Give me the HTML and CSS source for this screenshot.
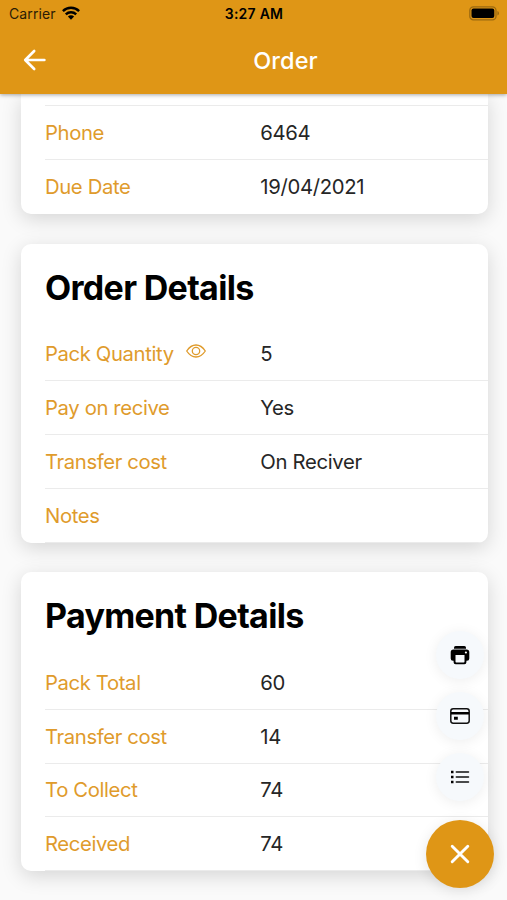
FILE: index.html
```html
<!DOCTYPE html>
<html lang="en">
<head>
<meta charset="utf-8">
<meta name="viewport" content="width=device-width, initial-scale=1">
<title>Order</title>
<link rel="stylesheet" href="styles.css">
</head>
<body>
<header class="header">
  <div class="status">
    <div class="status-left">
      <span class="carrier">Carrier</span>
      <svg class="wifi" viewBox="0 0 18 14" width="18" height="14"><g fill="none" stroke="#000" stroke-width="2.4"><path d="M.9 5.1a11.5 11.5 0 0 1 16.2 0"/><path d="M3.8 8.4a7.4 7.4 0 0 1 10.4 0"/></g><path d="M5.900 10.600a4.400 4.400 0 0 1 6.200 0L9 13.800z"/></svg>
    </div>
    <span class="clock">3:27 AM</span>
    <svg class="battery" viewBox="0 0 31 15" width="31" height="15"><rect x=".8" y=".8" width="26.2" height="13" rx="3.6" fill="none" stroke="#9c6a10" stroke-width="1.3"/><rect x="2.5" y="2.5" width="22.8" height="9.6" rx="2"/><path d="M28.4 5v4.6q1.6-.6 1.6-2.3T28.4 5z" fill="#9c6a10"/></svg>
  </div>
  <div class="navbar">
    <svg class="back" viewBox="0 0 24 22" width="24" height="22" fill="none" stroke="#fff" stroke-width="2.6" stroke-linecap="round" stroke-linejoin="round"><path d="M11.2 2 2.2 11l9 9M2.8 11h18.6"/></svg>
    <h1 class="title">Order</h1>
  </div>
</header>
<main class="content">
  <section class="card card-continued">
    <div class="row row-hidden"></div>
    <div class="row"><span class="label">Phone</span><span class="value">6464</span></div>
    <div class="row"><span class="label">Due Date</span><span class="value">19/04/2021</span></div>
  </section>
  <section class="card">
    <h2 class="heading">Order Details</h2>
    <div class="row"><span class="label">Pack Quantity
      <svg class="eye" viewBox="0 0 20 14" width="20" height="14" fill="none" stroke="currentColor" stroke-width="1.3"><path d="M.7 7C3.2 3.2 6.4 1 10 1s6.800 2.200 9.300 6C16.800 10.800 13.600 13 10 13S3.200 10.800.7 7z"/><circle cx="10" cy="7" r="3.700"/></svg></span><span class="value">5</span></div>
    <div class="row"><span class="label">Pay on recive</span><span class="value">Yes</span></div>
    <div class="row"><span class="label">Transfer cost</span><span class="value">On Reciver</span></div>
    <div class="row"><span class="label">Notes</span><span class="value"></span></div>
  </section>
  <section class="card">
    <h2 class="heading">Payment Details</h2>
    <div class="row"><span class="label">Pack Total</span><span class="value">60</span></div>
    <div class="row"><span class="label">Transfer cost</span><span class="value">14</span></div>
    <div class="row"><span class="label">To Collect</span><span class="value">74</span></div>
    <div class="row"><span class="label">Received</span><span class="value">74</span></div>
  </section>
</main>
<nav class="fab">
  <button class="fab-item" aria-label="Print"><svg viewBox="0 0 20 20" width="20" height="20"><path d="M4 3.700V2.600Q4 1 5.600 1h8.800Q16 1 16 2.600v1.100z"/><path fill-rule="evenodd" d="M3.500 4.500h13q2.800 0 2.800 2.800v6.200q0 2.300-2.300 2.300h-.6v1.500q0 2-2 2H5.600q-2 0-2-2v-1.500H3Q.7 15.800.7 13.500V7.300q0-2.800 2.800-2.800zM5.500 10v6.700q0 .8.8.8h7.400q.8 0 .8-.8V10z"/><circle cx="15.900" cy="7.500" r="1.100" fill="#fff"/></svg></button>
  <button class="fab-item" aria-label="Card"><svg viewBox="0 0 20 16" width="20" height="16"><rect x=".8" y=".8" width="18.400" height="14.400" rx="2.400" fill="none" stroke="#111" stroke-width="1.500"/><path d="M1 4h18v2.400H1zM4 8.800h3.800v3H4z"/></svg></button>
  <button class="fab-item" aria-label="List"><svg viewBox="0 0 20 14" width="20" height="14"><path d="M6.300 2H18.500M6.300 7H18.500M6.300 12H18.500" stroke="#111" stroke-width="1.500" stroke-linecap="round"/><path d="M1 .8h2.500v2.500H1zM1 5.800h2.500v2.500H1zM1 10.700h2.500v2.500H1z"/></svg></button>
  <button class="fab-main" aria-label="Close"><svg viewBox="0 0 20 20" width="20" height="20" stroke="#fff" stroke-width="2.900" stroke-linecap="round"><path d="m2.200 2.200 15.600 15.600M17.800 2.200 2.200 17.800"/></svg></button>
</nav>
</body>
</html>
```
FILE: styles.css
```css
* { box-sizing: border-box; }
body {
  margin: 0;
  height: 900px;
  overflow: hidden;
  background: #fafafa;
  font-family: Inter, "Liberation Sans", sans-serif;
  color: #262626;
}
.header {
  position: relative;
  z-index: 1;
  height: 94px;
  background: #df9616;
  box-shadow: 0 1px 4px rgba(0, 0, 0, .35);
}
.status {
  display: grid;
  grid-template-columns: 1fr auto 1fr;
  align-items: center;
  height: 27px;
  padding: 0 7px 0 9px;
  color: #000;
}
.status-left { display: flex; align-items: center; gap: 6px; }
.carrier { font-size: 14px; letter-spacing: .1px; color: #2a1c05; }
.wifi { margin-top: -2px; }
.clock { margin-right: 1px; font-size: 14px; font-weight: 600; letter-spacing: .25px; }
.battery { justify-self: end; }
.navbar {
  display: flex;
  align-items: center;
  height: 67px;
  padding: 0 21px 0 23px;
}
.back { flex: none; margin-top: -2px; }
.title {
  flex: 1;
  margin: 0;
  padding-left: 38px;
  text-align: center;
  font-size: 23.500px;
  font-weight: 500;
  letter-spacing: .1px;
  color: #fff;
}
.content {
  display: flex;
  flex-direction: column;
  gap: 29.500px;
  padding: 0 19.500px 0 20.500px;
}
.card {
  height: 299px;
  padding-left: 24.500px;
  border-radius: 10px;
  background: #fff;
  box-shadow: 0 5px 20px rgba(0, 0, 0, .15);
  overflow: hidden;
}
.card-continued { height: 120px; border-radius: 0 0 10px 10px; }
.heading {
  margin: 0;
  height: 84px;
  padding-top: 3px;
  line-height: 82px;
  font-size: 34px;
  font-weight: 700;
  letter-spacing: -.68px;
  color: #000;
}
.row {
  display: grid;
  grid-template-columns: 215.200px 1fr;
  align-items: center;
  height: 53.750px;
  border-bottom: 1px solid #ebebeb;
  font-size: 20.300px;
}
.row-hidden { height: 12px; }
.card-continued .row:last-child { border-bottom: 0; }
.label { color: #df9b2c; letter-spacing: -.38px; }
.value { letter-spacing: -.3px; }
.eye { margin-left: 7px; vertical-align: 3px; }
.fab {
  position: absolute;
  z-index: 2;
  top: 631px;
  left: 426px;
  display: flex;
  flex-direction: column;
  align-items: center;
  width: 68px;
  gap: 13px;
}
.fab button {
  display: flex;
  align-items: center;
  justify-content: center;
  padding: 0;
  border: 0;
  border-radius: 50%;
}
.fab .fab-item {
  width: 48px;
  height: 48px;
  background: #f6f9fc;
  box-shadow: 0 2px 14px rgba(0, 0, 0, .07);
}
.fab .fab-main {
  width: 68px;
  height: 68px;
  margin-top: 6px;
  background: #df9616;
  box-shadow: 0 3px 14px rgba(0, 0, 0, .1);
}
```
